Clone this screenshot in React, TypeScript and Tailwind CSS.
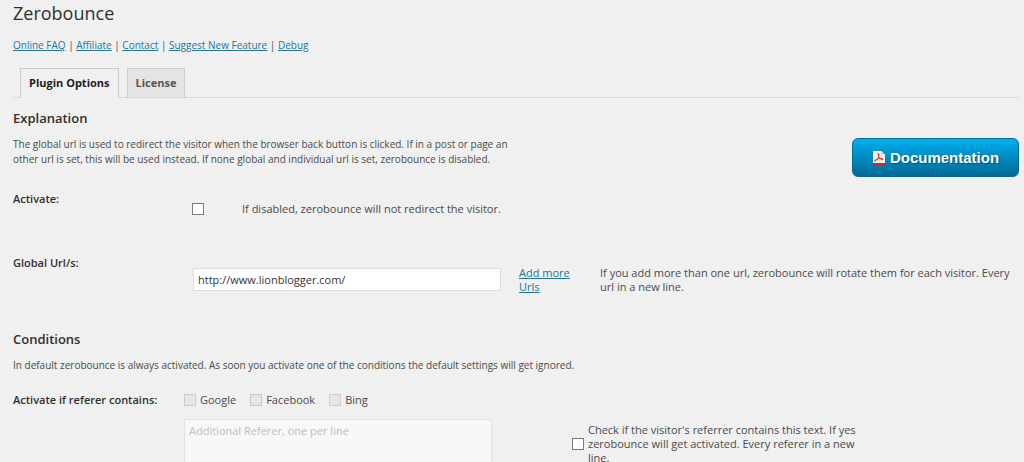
import React, { useState } from 'react';

const LINKS = ['Online FAQ', 'Affiliate', 'Contact', 'Suggest New Feature', 'Debug'];
const TABS = ['Plugin Options', 'License'];
const ENGINES = ['Google', 'Facebook', 'Bing'];

const PdfIcon: React.FC = () => (
  <svg width="14" height="16" viewBox="0 0 14 16" aria-hidden="true">
    <path d="M1 1h8.5L13 4.5V15H1z" fill="#f4f4f4" />
    <path d="M9.5 1 13 4.5H9.5z" fill="#b9c4cc" />
    <path d="M1 13h12v2H1z" fill="#d22" />
    <path
      d="M6.2 3.2c1.4 0 .8 3-.4 5.2C4.8 10.3 3.2 11.7 2.6 11.2c-.6-.6 1.4-1.9 3.6-2.4 2.2-.5 5-.4 5 .5 0 1-2.4.2-3.6-1.3C6.4 6.5 5.4 3.3 6.2 3.2z"
      fill="none"
      stroke="#d8302b"
      strokeWidth="1"
    />
  </svg>
);

const Checkbox: React.FC<React.InputHTMLAttributes<HTMLInputElement>> = (props) => (
  <input
    type="checkbox"
    className="h-3 w-3 shrink-0 appearance-none border border-[#7b7b7b] bg-white checked:bg-[#1e8cbe] disabled:border-[#cccccc] disabled:bg-[#e6e6e6]"
    {...props}
  />
);

const SectionTitle: React.FC<{ children: React.ReactNode }> = ({ children }) => (
  <h2 className="text-[13px] leading-5 font-semibold text-[#2f2f2f]">{children}</h2>
);

export default function App() {
  const [activeTab, setActiveTab] = useState(TABS[0]);
  const [active, setActive] = useState(false);
  const [urls, setUrls] = useState('http://www.lionblogger.com/');

  return (
    <div className="h-screen overflow-hidden bg-[#f0f0f0] pr-[5px] pl-[13px] font-['Open_Sans',sans-serif] text-[11px] leading-[14px] text-[#4a4a4a]">
      <h1 className="pt-px text-lg leading-6 text-[#2f2f2f]">Zerobounce</h1>

      <nav className="mt-3 text-[10px] leading-4">
        {LINKS.map((link, i) => (
          <React.Fragment key={link}>
            {i > 0 && ' | '}
            <a href="#" className="text-[#21759b] underline">{link}</a>
          </React.Fragment>
        ))}
      </nav>

      <div role="tablist" className="mt-[15px] flex gap-2 border-b border-[#d8d8d8] pl-[7px]">
        {TABS.map((tab) => (
          <button
            key={tab}
            role="tab"
            aria-selected={activeTab === tab}
            onClick={() => setActiveTab(tab)}
            className={`${
              activeTab === tab
                ? 'border-b-[#f0f0f0] bg-[#f0f0f0] text-[#1c1c1c]'
                : 'border-b-[#d8d8d8] bg-[#e4e4e4] text-[#555555]'
            } -mb-px h-[30px] border border-[#cccccc] px-2 text-[11px] font-bold`}
          >
            {tab}
          </button>
        ))}
      </div>

      <section className="mt-2.5">
        <div className="flex items-start justify-between">
          <div>
            <SectionTitle>Explanation</SectionTitle>
            <p className="mt-[9px] w-[504px] text-[10px] leading-[15px]">
              The global url is used to redirect the visitor when the browser back button is clicked. If in a post or page an
              other url is set, this will be used instead. If none global and individual url is set, zerobounce is disabled.
            </p>
          </div>
          <a
            href="#"
            className="mt-[30px] flex h-[39px] w-[167px] shrink-0 items-center justify-center gap-1 rounded-md border border-[#0b6a94] bg-linear-to-b from-[#00b0f0] to-[#006a96] font-['Liberation_Sans',Arial,sans-serif] text-[15px] leading-5 font-bold text-white text-shadow-[1px_1px_1px_#04506f]"
          >
            <PdfIcon />
            Documentation
          </a>
        </div>

        <div className="mt-[15px] flex items-start">
          <label htmlFor="activate" className="w-[179px] font-semibold text-[#2f2f2f]">Activate:</label>
          <div className="flex items-center gap-[38px] pt-2.5">
            <Checkbox id="activate" checked={active} onChange={(e) => setActive(e.target.checked)} />
            <span>If disabled, zerobounce will not redirect the visitor.</span>
          </div>
        </div>

        <div className="mt-10 flex items-start">
          <label htmlFor="urls" className="w-[180px] shrink-0 font-semibold text-[#2f2f2f]">Global Url/s:</label>
          <input
            id="urls"
            type="text"
            value={urls}
            onChange={(e) => setUrls(e.target.value)}
            className="mt-3 h-[23px] w-[308px] border border-[#dddddd] bg-white px-1 text-[11px] text-[#333333]"
          />
          <a href="#" className="mt-2.5 ml-[18px] w-[60px] shrink-0 text-[#21759b] underline">Add more Urls</a>
          <p className="mt-2.5 ml-[21px] flex-1">
            If you add more than one url, zerobounce will rotate them for each visitor. Every url in a new line.
          </p>
        </div>
      </section>

      <section className="mt-[35px]">
        <SectionTitle>Conditions</SectionTitle>
        <p className="mt-[9px] text-[10px] leading-[15px]">
          In default zerobounce is always activated. As soon you activate one of the conditions the default settings will get ignored.
        </p>

        <div className="mt-5 flex items-start">
          <label htmlFor="referer" className="w-[171px] shrink-0 font-semibold text-[#2f2f2f]">Activate if referer contains:</label>
          <div>
            <div className="flex gap-3.5">
              {ENGINES.map((engine) => (
                <label key={engine} className="flex items-center gap-1">
                  <Checkbox disabled />
                  {engine}
                </label>
              ))}
            </div>
            <div className="mt-3 flex items-start">
              <textarea
                id="referer"
                disabled
                rows={5}
                placeholder="Additional Referer, one per line"
                className="w-[308px] resize-none border border-[#e2e2e2] bg-[#f8f8f8] px-1 py-1 text-[11px] leading-[14px] placeholder:text-[#bdbdbd]"
              />
              <label className="mt-1 ml-20 flex w-[290px] items-center gap-1">
                <Checkbox />
                Check if the visitor's referrer contains this text. If yes zerobounce will get activated. Every referer in a new line.
              </label>
            </div>
          </div>
        </div>
      </section>
    </div>
  );
}
